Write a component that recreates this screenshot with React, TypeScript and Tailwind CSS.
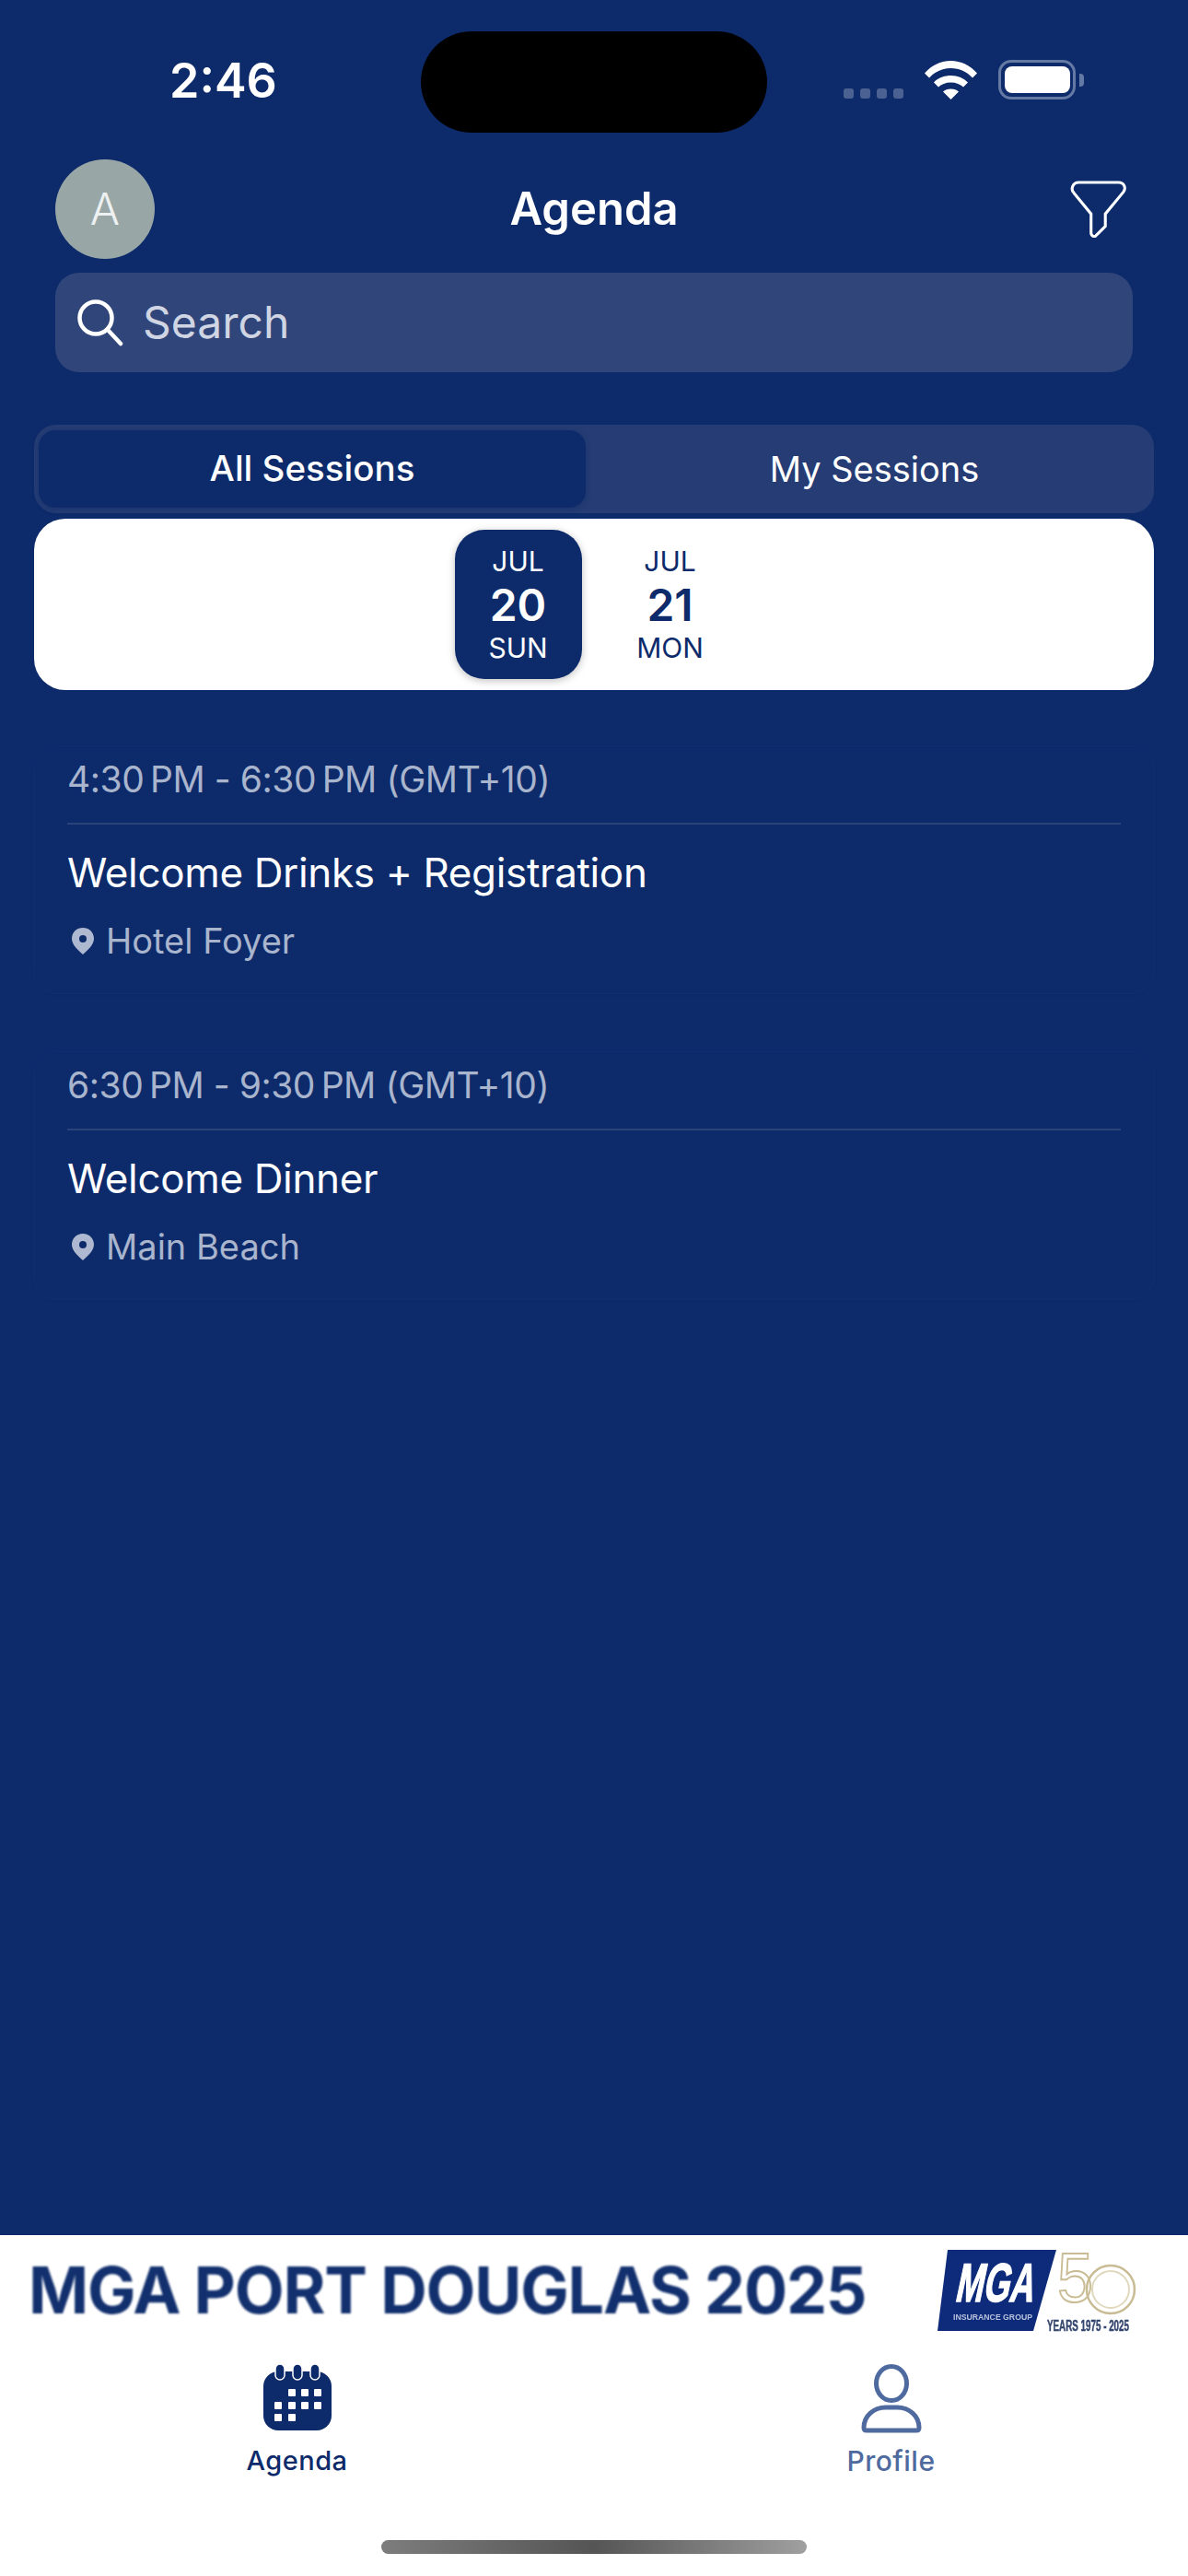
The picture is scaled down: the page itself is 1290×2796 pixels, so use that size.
const NAVY = '#0d2b6b';

function Wifi() {
  return (
    <svg width="57" height="42" viewBox="0 0 57 42" fill="white">
      <path d="M0 13.5C7.5 5 17.5 0 28.5 0S49.5 5 57 13.5L52 18.5C46 12 37.5 8 28.5 8S11 12 5 18.5Z" />
      <path d="M10 23.5C14 19 21 16 28.5 16S43 19 47 23.5L42 28.5C39 25.5 34 23.5 28.5 23.5S18 25.5 15 28.5Z" />
      <path d="M20 33.5C22 31.5 25 30.5 28.5 30.5S35 31.5 37 33.5L28.5 42Z" />
    </svg>
  );
}

function StatusBar() {
  return (
    <div className="flex h-[173px] items-start">
      <div className="w-[457px] pt-[59px] pl-[184px] text-[52px] leading-[58px] font-semibold text-white">2:46</div>
      <div className="mt-[34px] h-[110px] w-[376px] rounded-[55px] bg-black" />
      <div className="flex items-end pt-[65px] pl-[83px]">
        <div className="flex gap-[7px] pb-[1px]">
          <div className="h-[11px] w-[11px] rounded-[3px] bg-[#4a6192]" />
          <div className="h-[11px] w-[11px] rounded-[3px] bg-[#4a6192]" />
          <div className="h-[11px] w-[11px] rounded-[3px] bg-[#4a6192]" />
          <div className="h-[11px] w-[11px] rounded-[3px] bg-[#4a6192]" />
        </div>
        <div className="ml-[23px]">
          <Wifi />
        </div>
        <div className="ml-[23px] flex items-center">
          <div className="flex h-[43px] w-[84px] items-center justify-center rounded-[14px] border-[3px] border-[#6579a5]">
            <div className="h-[29px] w-[71px] rounded-[8px] bg-white" />
          </div>
          <div className="ml-[4px] h-[14px] w-[5px] rounded-r-[4px] bg-[#6579a5]" />
        </div>
      </div>
    </div>
  );
}

function Header() {
  return (
    <div className="flex h-[108px] items-center justify-between px-[60px]">
      <div className="flex h-[108px] w-[108px] items-center justify-center rounded-full bg-[#98a6a6] text-[48px] font-light text-[#eef1f1]">A</div>
      <div className="text-[49px] leading-[60px] font-semibold text-white">Agenda</div>
      <div className="flex w-[108px] justify-end">
        <svg width="62" height="62" viewBox="0 0 60 60" fill="none" stroke="white" strokeWidth="3" className="mr-[6px]">
          <path d="M9 2H51C57 2 59 8 56 12L37 35V48L27 58C25 59.5 22 58 22 55V35L4 13C0 9 3 2 9 2Z" />
        </svg>
      </div>
    </div>
  );
}

function SearchBox() {
  return (
    <div className="mx-[60px] mt-[15px] flex h-[108px] items-center rounded-[26px] bg-[#30467a] pl-[23px]">
      <svg width="52" height="52" viewBox="0 0 52 52" fill="none" stroke="white" strokeWidth="4.5" strokeLinecap="round">
        <circle cx="21" cy="21" r="17.5" />
        <path d="M34 34L48 49" />
      </svg>
      <span className="ml-[20px] text-[48px] text-[#d0d5e3]">Search</span>
    </div>
  );
}

function Segments() {
  return (
    <div className="mx-[37px] mt-[57px] flex h-[96px] items-center rounded-[24px] bg-[#253c74] pl-[5px]">
      <div className="flex h-[84px] w-[594px] items-center justify-center rounded-[18px] bg-[#0d2b6b] text-[38.5px] font-medium text-white shadow-[0_2px_6px_rgba(13,43,107,0.4)]">
        All Sessions
      </div>
      <div className="flex-1 pl-[10px] text-center text-[38px] text-white">My Sessions</div>
    </div>
  );
}

function DateCell({ month, day, weekday, active }: { month: string; day: string; weekday: string; active?: boolean }) {
  return (
    <div
      className={
        active
          ? 'flex h-[162px] w-[138px] flex-col items-center rounded-[32px] bg-[#0d2b6b] pt-[16px] text-white shadow-[0_2px_8px_rgba(0,0,0,0.25)]'
          : 'flex h-[162px] w-[138px] flex-col items-center rounded-[32px] pt-[16px] text-[#0d2b6b]'
      }
    >
      <div className="text-[30px] leading-[36px]">{month}</div>
      <div className="mt-[2px] text-[48px] leading-[56px] font-semibold">{day}</div>
      <div className="mt-[0px] text-[30px] leading-[36px]">{weekday}</div>
    </div>
  );
}

function DateStrip() {
  return (
    <div className="mx-[37px] mt-[6px] flex h-[186px] items-center justify-center gap-[27px] rounded-[34px] bg-white">
      <DateCell month="JUL" day="20" weekday="SUN" active />
      <DateCell month="JUL" day="21" weekday="MON" />
    </div>
  );
}

function SessionCard({ time, title, place }: { time: string; title: string; place: string }) {
  return (
    <div className="h-[270px] rounded-[24px] border border-[#0f2e6f] px-[36px] pt-[11px] shadow-[0_1px_3px_rgba(0,0,0,0.06)]">
      <div className="h-[74px] border-b-2 border-[#2a4378] text-[39px] leading-[48px] tracking-[-0.45px] text-[#a9b4cd]">
        <div className="pt-[1px]">{time}</div>
      </div>
      <div className="mt-[24px] text-[44px] leading-[56px] tracking-[-0.35px] text-white">{title}</div>
      <div className="mt-[22px] flex items-center">
        <svg width="24" height="29" viewBox="0 0 24 29" fill="#aeb8d0" fillRule="evenodd" className="ml-[5px]">
          <path d="M12 0C5 0 0 5 0 12C0 19 8 25 12 29C16 25 24 19 24 12C24 5 19 0 12 0Z M12 8a4 4 0 1 0 0 8a4 4 0 1 0 0-8Z" />
        </svg>
        <span className="ml-[13px] text-[38px] leading-[48px] text-[#a9b4cd]">{place}</span>
      </div>
    </div>
  );
}

function BrandLogo() {
  return (
    <svg width="230" height="110" viewBox="0 0 230 110" className="blur-[0.6px]">
      <g transform="translate(0 16)">
        <polygon points="11,0 129,0 104,88 0,88" fill="#0d2b7a" />
        <text
          x="30"
          y="56"
          transform="skewX(-12)"
          fontFamily="Liberation Sans"
          fontWeight="700"
          fontSize="59"
          textLength="85"
          lengthAdjust="spacingAndGlyphs"
          fill="white"
          stroke="white"
          strokeWidth="1.5"
        >
          MGA
        </text>
        <text x="17" y="76" fontFamily="Liberation Sans" fontWeight="700" fontSize="9" textLength="86" lengthAdjust="spacingAndGlyphs" fill="#b9c2dc">
          INSURANCE GROUP
        </text>
        <text x="130" y="56" fontFamily="Liberation Sans" fontSize="76" textLength="39" lengthAdjust="spacingAndGlyphs" fill="none" stroke="#c9bc94" strokeWidth="2">
          5
        </text>
        <circle cx="188" cy="43" r="26" fill="none" stroke="#c9bc94" strokeWidth="2.5" />
        <circle cx="188" cy="43" r="20" fill="none" stroke="#e0d8bd" strokeWidth="2" />
        <text
          transform="translate(119 88) scale(1 1.7)"
          fontFamily="Liberation Sans"
          fontWeight="700"
          fontSize="10"
          textLength="89"
          lengthAdjust="spacingAndGlyphs"
          fill="#34466f"
          stroke="#34466f"
          strokeWidth="0.3"
        >
          YEARS 1975 - 2025
        </text>
      </g>
    </svg>
  );
}

function Banner() {
  return (
    <div className="flex h-[110px] items-start">
      <div className="ml-[31px] w-[987px] pt-[18px] text-[70px] leading-[84px] font-bold tracking-[-1.2px] whitespace-nowrap text-[#12306e] blur-[1px]">
        MGA PORT DOUGLAS 2025
      </div>
      <BrandLogo />
    </div>
  );
}

function TabBar() {
  return (
    <div className="grid grid-cols-2 pt-[30px]">
      <div className="flex flex-col items-center">
        <svg width="74" height="72" viewBox="0 0 74 72">
          <rect x="0" y="8" width="74" height="64" rx="16" fill="#0d2b6b" />
          <g fill="#0d2b6b" stroke="white" strokeWidth="1.5">
            <rect x="13" y="0" width="10" height="17" rx="5" />
            <rect x="32" y="0" width="10" height="17" rx="5" />
            <rect x="51" y="0" width="10" height="17" rx="5" />
          </g>
          <g fill="white">
            <rect x="27" y="27" width="8" height="8" rx="1" />
            <rect x="41" y="27" width="8" height="8" rx="1" />
            <rect x="55" y="27" width="8" height="8" rx="1" />
            <rect x="12" y="41" width="8" height="8" rx="1" />
            <rect x="27" y="41" width="8" height="8" rx="1" />
            <rect x="41" y="41" width="8" height="8" rx="1" />
            <rect x="55" y="41" width="8" height="8" rx="1" />
            <rect x="12" y="54" width="8" height="8" rx="1" />
            <rect x="27" y="54" width="8" height="8" rx="1" />
          </g>
        </svg>
        <div className="mt-[14px] text-[29px] leading-[38px] font-medium tracking-[0.5px] text-[#0d2b6b]">Agenda</div>
      </div>
      <div className="flex flex-col items-center">
        <svg width="66" height="75" viewBox="0 0 66 75" fill="none" stroke="#4e6a9f" strokeWidth="5">
          <ellipse cx="33" cy="21" rx="16.5" ry="18.5" />
          <path d="M3 69C3 56 14 47 27 47H39C52 47 63 56 63 69C63 71 62 72 60 72H6C4 72 3 71 3 69Z" />
        </svg>
        <div className="mt-[11px] text-[30px] leading-[38px] font-medium tracking-[0.5px] text-[#4e6a9f]">Profile</div>
      </div>
    </div>
  );
}

export default function App() {
  return (
    <div className="flex h-[2796px] w-[1290px] flex-col overflow-hidden font-['Inter',sans-serif]" style={{ backgroundColor: NAVY }}>
      <StatusBar />
      <Header />
      <SearchBox />
      <Segments />
      <DateStrip />
      <div className="mx-[36px] mt-[60px] flex flex-col gap-[62px]">
        <SessionCard time={'4:30\u202FPM - 6:30\u202FPM (GMT+10)'} title="Welcome Drinks + Registration" place="Hotel Foyer" />
        <SessionCard time={'6:30\u202FPM - 9:30\u202FPM (GMT+10)'} title="Welcome Dinner" place="Main Beach" />
      </div>
      <div className="mt-auto h-[370px] bg-white">
        <Banner />
        <TabBar />
        <div className="mx-auto mt-[67px] h-[15px] w-[462px] rounded-full bg-gradient-to-r from-[#7d7d7d] via-[#555555] to-[#a0a0a0]" />
      </div>
    </div>
  );
}
